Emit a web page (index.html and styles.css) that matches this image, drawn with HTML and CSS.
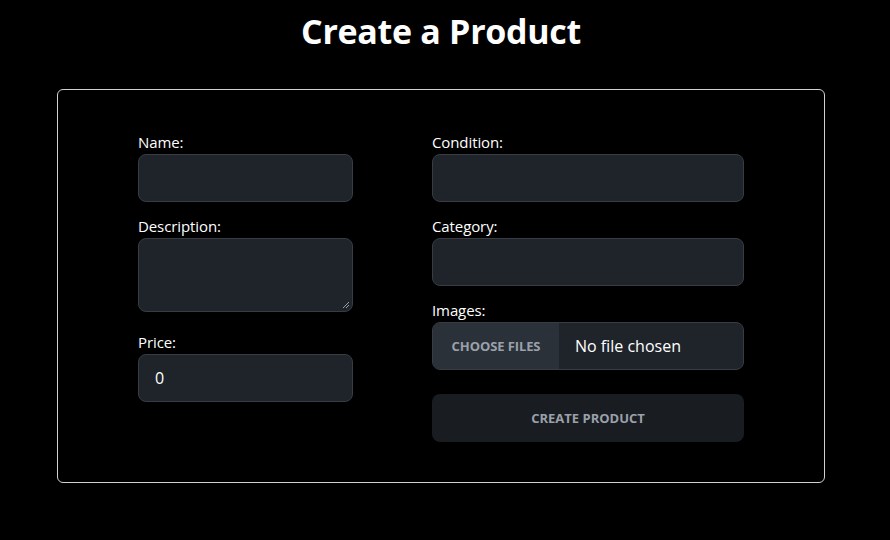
FILE: index.html
```html
<!DOCTYPE html>
<html>
<head>
<meta charset="utf-8">
<link rel="stylesheet" href="styles.css">
</head>
<body>
<div class="page">
  <h1 class="title">Create a Product</h1>
  <form class="card">
    <div class="col col-left">
      <div class="field">
        <label class="label">Name:</label>
        <div class="input"></div>
      </div>
      <div class="field field-area">
        <label class="label">Description:</label>
        <div class="input textarea">
          <svg class="grip" width="8" height="8" viewBox="0 0 8 8"><path d="M7 1 L1 7 M7 4 L4 7" stroke="#9aa0a8" stroke-width="1"/></svg>
        </div>
      </div>
      <div class="field">
        <label class="label">Price:</label>
        <div class="input value">0</div>
      </div>
    </div>
    <div class="col col-right">
      <div class="field">
        <label class="label">Condition:</label>
        <div class="input"></div>
      </div>
      <div class="field">
        <label class="label">Category:</label>
        <div class="input"></div>
      </div>
      <div class="field">
        <label class="label">Images:</label>
        <div class="input file">
          <span class="file-btn">CHOOSE FILES</span>
          <span class="file-text">No file chosen</span>
        </div>
      </div>
      <div class="submit">CREATE PRODUCT</div>
    </div>
  </form>
</div>
</body>
</html>
```
FILE: styles.css
```css
* { box-sizing: border-box; }
html, body { margin: 0; background: #000; }
body {
  font-family: "Open Sans", "Noto Sans", sans-serif;
  color: #fff;
}
.page {
  width: 882px;
  display: flex;
  flex-direction: column;
  align-items: center;
}
.title {
  margin: 0;
  height: 89px;
  padding-top: 8px;
  font-size: 34px;
  font-weight: 700;
  line-height: 46px;
  letter-spacing: -0.3px;
}
.card {
  width: 768px;
  height: 394px;
  border: 1px solid #cfd2d6;
  border-radius: 6px;
  padding: 40px 80px 0 80px;
  display: flex;
  gap: 79px;
}
.col { display: flex; flex-direction: column; }
.col-left { width: 215px; }
.col-right { width: 312px; }
.field { display: flex; flex-direction: column; margin-bottom: 12px; }
.field-area { margin-bottom: 18px; }
.label {
  font-size: 15px;
  line-height: 24px;
  letter-spacing: -0.1px;
}
.input {
  height: 48px;
  background: #1f242b;
  border: 1px solid #383c44;
  border-radius: 8px;
  position: relative;
}
.textarea { height: 74px; }
.grip { position: absolute; right: 2px; bottom: 2px; }
.value {
  padding-left: 16px;
  font-size: 16px;
  line-height: 46px;
}
.file {
  display: flex;
  overflow: hidden;
}
.file-btn {
  width: 126px;
  background: #2b3139;
  color: #9aa1ab;
  font-size: 13px;
  font-weight: 700;
  display: flex;
  align-items: center;
  justify-content: center;
  letter-spacing: -0.1px;
}
.file-text {
  padding-left: 16px;
  font-size: 16px;
  line-height: 46px;
}
.submit {
  margin-top: 12px;
  height: 48px;
  border-radius: 8px;
  background: #191c21;
  color: #9aa1ab;
  font-size: 13px;
  font-weight: 700;
  display: flex;
  align-items: center;
  justify-content: center;
}
```
